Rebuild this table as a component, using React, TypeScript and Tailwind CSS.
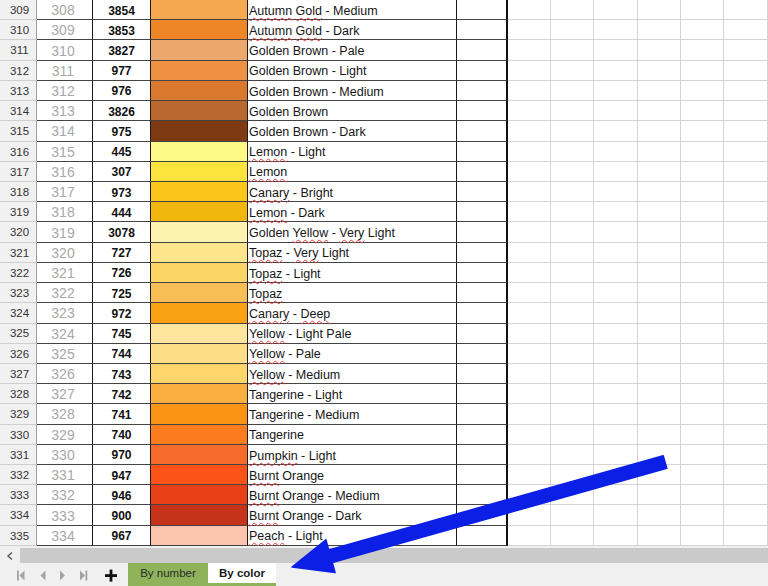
import React from "react";

type Row = [number, number, string, string, string];

const rows: Row[] = [
  [309, 308, "3854", "#f6a851", "~Autumn~ ~Gold~ - Medium"],
  [310, 309, "3853", "#ee8526", "~Autumn~ ~Gold~ - Dark"],
  [311, 310, "3827", "#eca86c", "Golden Brown - Pale"],
  [312, 311, "977", "#ee9142", "Golden Brown - Light"],
  [313, 312, "976", "#da792e", "Golden Brown - Medium"],
  [314, 313, "3826", "#b96830", "Golden Brown"],
  [315, 314, "975", "#7e3b13", "Golden Brown - Dark"],
  [316, 315, "445", "#fff987", "~Lemon~ - Light"],
  [317, 316, "307", "#fde33e", "~Lemon~"],
  [318, 317, "973", "#fbc61a", "~Canary~ - Bright"],
  [319, 318, "444", "#f2b70f", "~Lemon~ - Dark"],
  [320, 319, "3078", "#fdf3b1", "Golden ~Yellow~ - ~Very~ Light"],
  [321, 320, "727", "#fde58b", "~Topaz~ - ~Very~ Light"],
  [322, 321, "726", "#fbd666", "~Topaz~ - Light"],
  [323, 322, "725", "#f7be56", "~Topaz~"],
  [324, 323, "972", "#fba114", "~Canary~ - ~Deep~"],
  [325, 324, "745", "#fee59d", "~Yellow~ - Light Pale"],
  [326, 325, "744", "#fdde86", "~Yellow~ - Pale"],
  [327, 326, "743", "#fdd56a", "~Yellow~ - Medium"],
  [328, 327, "742", "#fbaf41", "Tangerine - Light"],
  [329, 328, "741", "#fb9315", "Tangerine - Medium"],
  [330, 329, "740", "#fb7b1f", "Tangerine"],
  [331, 330, "970", "#f76c2a", "~Pumpkin~ - Light"],
  [332, 331, "947", "#fc5318", "~Burnt~ Orange"],
  [333, 332, "946", "#e8411a", "~Burnt~ Orange - Medium"],
  [334, 333, "900", "#c5331b", "~Burnt~ Orange - Dark"],
  [335, 334, "967", "#fcc4ad", "~Peach~ - Light"],
];

function Name({ text }: { text: string }) {
  const parts = text.split(/(~[^~]+~)/).filter((p) => p.length > 0);
  return (
    <span className="whitespace-pre">
      {parts.map((p, i) =>
        p.startsWith("~") ? (
          <span
            key={i}
            className="underline decoration-wavy decoration-[#e23a3a] decoration-1 underline-offset-[2px]"
          >
            {p.slice(1, -1)}
          </span>
        ) : (
          <span key={i}>{p}</span>
        )
      )}
    </span>
  );
}

const font = { fontFamily: '"Liberation Sans", Arial, sans-serif' };

export default function App() {
  return (
    <div className="relative w-[768px] h-[586px] overflow-hidden bg-white" style={font}>
      <div className="flex flex-col h-[586px]">
        {/* grid rows */}
        <div className="flex flex-col h-[546px]">
          {rows.map((r) => (
            <div key={r[0]} className="flex h-[20.22px] shrink-0">
              <div className="w-[37px] shrink-0 bg-[#f1f1f1] border-r border-b border-r-[#9c9c9c] border-b-[#cfcfcf] flex items-center justify-center pl-[3px] pt-[2px] text-[11.5px] text-[#333]">
                {r[0]}
              </div>
              <div className="w-[56px] shrink-0 border-r border-b border-r-[#1a1a1a] border-b-[#444] flex items-center justify-center pr-[3px] pt-[2px] text-[14px] text-[#a8a8a8]">
                {r[1]}
              </div>
              <div className="w-[58px] shrink-0 border-r border-b border-r-[#1a1a1a] border-b-[#444] flex items-center justify-center pt-[2px] text-[12px] font-bold text-[#111]">
                {r[2]}
              </div>
              <div
                className="w-[97px] shrink-0 border-r border-b border-r-[#1a1a1a] border-b-[#444]"
                style={{ backgroundColor: r[3] }}
              />
              <div className="w-[209px] shrink-0 border-r border-b border-r-[#1a1a1a] border-b-[#444] flex items-center pl-[1px] pt-[3px] text-[12.5px] text-[#161616]">
                <Name text={r[4]} />
              </div>
              <div className="w-[51px] shrink-0 border-r-2 border-b border-r-[#111] border-b-[#444]" />
              <div className="w-[43px] shrink-0 border-r border-b border-[#d4d4d4]" />
              <div className="w-[43px] shrink-0 border-r border-b border-[#d4d4d4]" />
              <div className="w-[44px] shrink-0 border-r border-b border-[#d4d4d4]" />
              <div className="w-[43px] shrink-0 border-r border-b border-[#d4d4d4]" />
              <div className="w-[43px] shrink-0 border-r border-b border-[#d4d4d4]" />
              <div className="flex-1 border-r border-b border-[#d4d4d4]" />
            </div>
          ))}
        </div>

        {/* horizontal scrollbar */}
        <div className="flex h-[17px] bg-[#f0f0f0] pt-[2px]">
          <div className="w-[20px] flex items-center justify-center">
            <svg width="8" height="10" viewBox="0 0 8 10">
              <polyline points="6,1.5 2,5 6,8.5" fill="none" stroke="#555" strokeWidth="1.4" />
            </svg>
          </div>
          <div className="flex-1 bg-[#cacaca]" />
        </div>

        {/* sheet tabs */}
        <div className="flex flex-1 bg-[#f0f0f0] items-stretch">
          <div className="flex items-center w-[128px] shrink-0">
            <svg width="128" height="23" viewBox="0 0 128 23">
              <g fill="#a3a3a3">
                <rect x="17" y="7.5" width="1.8" height="10" />
                <polygon points="24.5,7.5 24.5,17.5 19.5,12.5" />
                <polygon points="45.5,7.5 45.5,17.5 40.5,12.5" />
                <polygon points="60,7.5 60,17.5 65,12.5" />
                <polygon points="80,7.5 80,17.5 85,12.5" />
                <rect x="85.5" y="7.5" width="1.8" height="10" />
              </g>
              <g fill="#111">
                <rect x="105" y="11.2" width="12" height="2.8" />
                <rect x="109.6" y="6.6" width="2.8" height="12" />
              </g>
            </svg>
          </div>
          <div className="w-[80px] shrink-0 bg-[#8fb35a] flex items-center justify-center text-[11.5px] text-[#2b2b2b] pb-[1px]">
            By number
          </div>
          <div className="w-[68px] shrink-0 bg-white border-b-[3px] border-[#8fb35a] flex items-center justify-center text-[11.5px] font-bold text-[#1a1a1a] pt-[2px]">
            By color
          </div>
          <div className="flex-1" />
        </div>
      </div>

      {/* blue annotation arrow */}
      <svg
        className="absolute inset-0 pointer-events-none"
        width="768"
        height="586"
        viewBox="0 0 768 586"
      >
        <polygon
          points="663.2,455.7 666.8,468.3 332.3,562.5 335.1,572.6 292,567 325.9,539.8 328.7,550"
          fill="#0c1fe6"
          stroke="#0c1fe6"
          strokeWidth="1.5"
          strokeLinejoin="round"
        />
      </svg>
    </div>
  );
}
